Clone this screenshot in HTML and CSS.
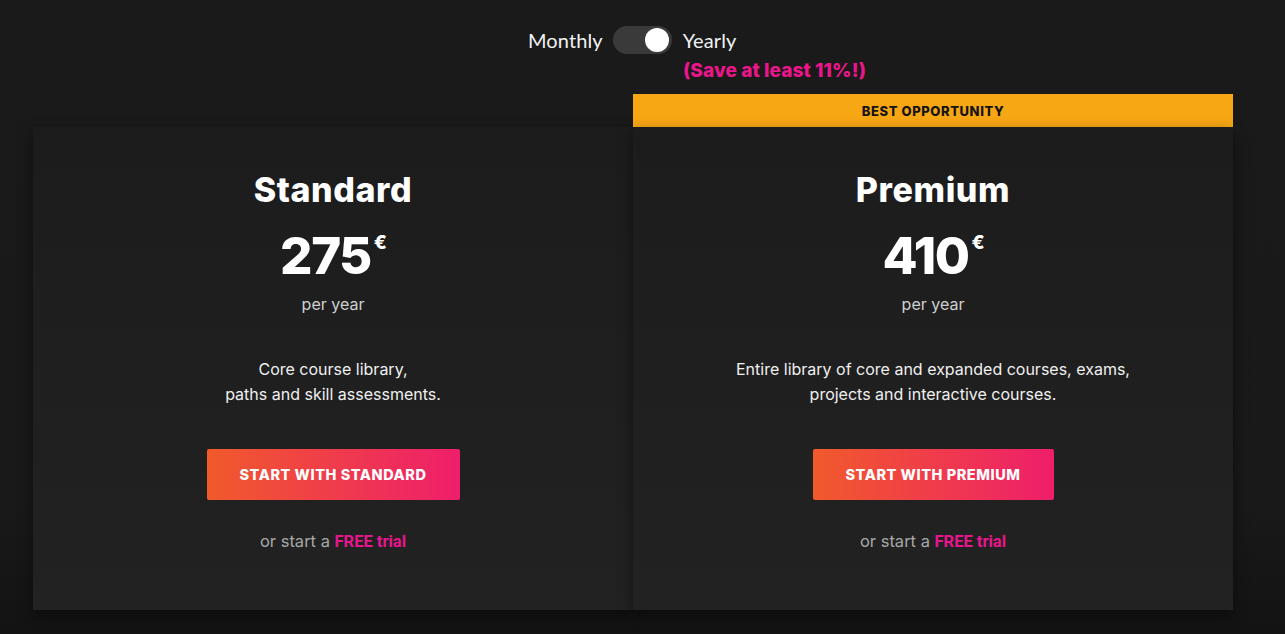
FILE: index.html
```html
<!DOCTYPE html>
<html>
<head>
<meta charset="utf-8">
<link rel="stylesheet" href="styles.css">
</head>
<body>
<div class="page">
  <div class="billing">
    <div class="toggle-row">
      <span class="period">Monthly</span>
      <span class="switch"><span class="knob"></span></span>
      <span class="period">Yearly</span>
    </div>
    <div class="save">(Save at least 11%!)</div>
  </div>
  <div class="plans">
    <div class="plan">
      <div class="plan-body">
        <h2 class="plan-name">Standard</h2>
        <div class="price">275<span class="cur">€</span></div>
        <div class="per">per year</div>
        <p class="desc">Core course library,<br>paths and skill assessments.</p>
        <a class="cta">START WITH STANDARD</a>
        <div class="trial">or start a <span class="free">FREE trial</span></div>
      </div>
    </div>
    <div class="plan featured">
      <div class="banner">BEST OPPORTUNITY</div>
      <div class="plan-body">
        <h2 class="plan-name">Premium</h2>
        <div class="price">410<span class="cur">€</span></div>
        <div class="per">per year</div>
        <p class="desc">Entire library of core and expanded courses, exams,<br>projects and interactive courses.</p>
        <a class="cta">START WITH PREMIUM</a>
        <div class="trial">or start a <span class="free">FREE trial</span></div>
      </div>
    </div>
  </div>
</div>
</body>
</html>
```
FILE: styles.css
```css
* { box-sizing: border-box; }
html, body { margin: 0; height: 100%; }
body {
  background: linear-gradient(#1a1a1a 0%, #191919 80%, #131313 100%);
  font-family: "Inter", "Roboto", "Liberation Sans", sans-serif;
  color: #fff;
  overflow: hidden;
}
.page { width: 1285px; height: 634px; }
.billing {
  display: flex;
  flex-direction: column;
  align-items: flex-start;
  padding: 26px 0 0 528px;
  height: 94px;
}
.toggle-row {
  display: flex;
  align-items: center;
  height: 28px;
}
.period {
  font-family: "Lato", "Inter", sans-serif;
  font-size: 20px;
  color: #f2f2f2;
  letter-spacing: 0.1px;
}
.switch {
  width: 59px;
  height: 28px;
  border-radius: 14px;
  background: #3a3a3a;
  margin: 0 11px 0 10px;
  display: flex;
  align-items: center;
  justify-content: flex-end;
  padding-right: 3px;
}
.knob {
  width: 24px;
  height: 24px;
  border-radius: 50%;
  background: #fff;
}
.save {
  margin: 5px 0 0 155px;
  font-family: "Inter", "Lato", sans-serif;
  font-weight: 800;
  font-size: 19px;
  color: #ea168a;
  letter-spacing: 0.1px;
}
.plans {
  display: flex;
  align-items: flex-end;
  margin-left: 33px;
}
.plan {
  width: 600px;
  display: flex;
  flex-direction: column;
}
.plan-body {
  height: 483px;
  background: linear-gradient(#1c1c1c, #222222);
  box-shadow: 0 6px 14px rgba(0,0,0,0.45);
  display: flex;
  flex-direction: column;
  align-items: center;
  padding-top: 43px;
}
.banner {
  height: 33px;
  background: #f7a614;
  color: #141414;
  font-family: "Inter", "Lato", sans-serif;
  font-weight: 800;
  font-size: 13px;
  letter-spacing: 0.6px;
  display: flex;
  align-items: center;
  justify-content: center;
}
.plan-name {
  margin: 0;
  font-family: "Inter", "Lato", sans-serif;
  font-weight: 800;
  font-size: 34px;
  line-height: 40px;
  letter-spacing: 0.6px;
}
.price {
  margin-top: 18px;
  font-family: "Inter", "Lato", sans-serif;
  font-weight: 800;
  font-size: 51px;
  line-height: 56px;
  position: relative;
  padding-right: 15px;
  letter-spacing: -1.5px;
}
.cur {
  position: absolute;
  right: -1px;
  top: 5px;
  font-size: 19px;
  line-height: 20px;
  letter-spacing: 0;
}
.per {
  margin-top: 10px;
  font-size: 16px;
  color: #d0d0d0;
  line-height: 20px;
}
.desc {
  margin: 43px 0 0;
  text-align: center;
  font-size: 16px;
  line-height: 25px;
  color: #f0f0f0;
}
.cta {
  margin-top: 42px;
  height: 51px;
  padding: 0 33px;
  display: flex;
  align-items: center;
  background: linear-gradient(90deg, #f15a2b, #ee1e6b);
  border-radius: 2px;
  color: #fff;
  font-family: "Inter", "Lato", sans-serif;
  font-weight: 800;
  font-size: 14.5px;
  letter-spacing: 0.55px;
}
.trial {
  margin-top: 31px;
  font-size: 16.5px;
  color: #a8a8a8;
}
.free {
  color: #e7168c;
  font-weight: 700;
  font-family: "Roboto", "Inter", sans-serif;
}
```
